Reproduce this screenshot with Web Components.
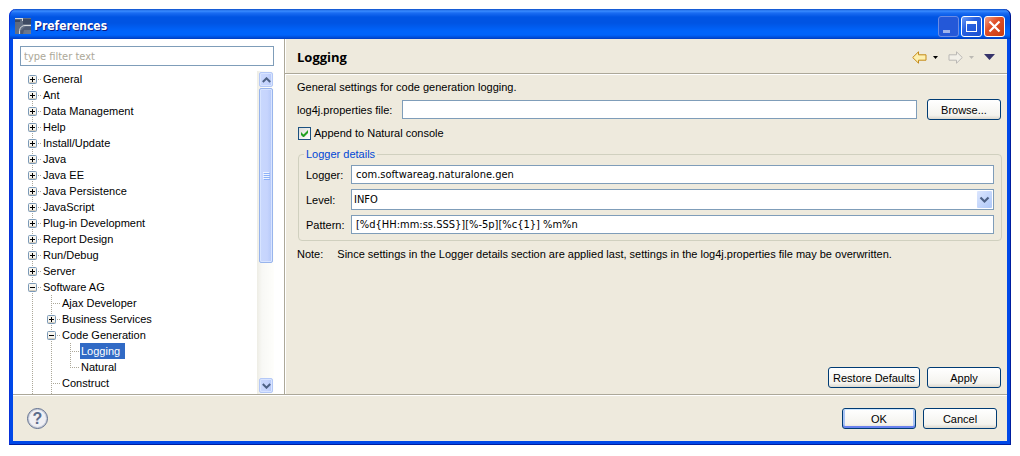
<!DOCTYPE html>
<html lang="en">
<head>
<meta charset="utf-8">
<title>Preferences</title>
<style>
  html { height: 100%; }
  body {
    margin: 0; height: 100vh; box-sizing: border-box; padding: 9px 9px 11px;
    display: flex; background: #fff; color: #000;
    font: 11px/16px "Liberation Sans", sans-serif;
    --line: #aca899; --face: #eeeadd; --field: #7f9db9;
  }
</style>
</head>
<body>
<xp-window caption="Preferences">
  <pref-sidebar slot="side">
    <tree-item label="General" kind="closed" first></tree-item>
    <tree-item label="Ant" kind="closed"></tree-item>
    <tree-item label="Data Management" kind="closed"></tree-item>
    <tree-item label="Help" kind="closed"></tree-item>
    <tree-item label="Install/Update" kind="closed"></tree-item>
    <tree-item label="Java" kind="closed"></tree-item>
    <tree-item label="Java EE" kind="closed"></tree-item>
    <tree-item label="Java Persistence" kind="closed"></tree-item>
    <tree-item label="JavaScript" kind="closed"></tree-item>
    <tree-item label="Plug-in Development" kind="closed"></tree-item>
    <tree-item label="Report Design" kind="closed"></tree-item>
    <tree-item label="Run/Debug" kind="closed"></tree-item>
    <tree-item label="Server" kind="closed"></tree-item>
    <tree-item label="Software AG" kind="open">
      <tree-item label="Ajax Developer"></tree-item>
      <tree-item label="Business Services" kind="closed"></tree-item>
      <tree-item label="Code Generation" kind="open">
        <tree-item label="Logging" selected></tree-item>
        <tree-item label="Natural" last></tree-item>
      </tree-item>
      <tree-item label="Construct" class="tail"></tree-item>
    </tree-item>
  </pref-sidebar>
  <logging-page slot="page"></logging-page>
  <dialog-footer slot="footer"></dialog-footer>
</xp-window>

<script>
const define = (name, markup, setup) => {
  const template = document.createElement('template');
  template.innerHTML = markup;
  customElements.define(name, class extends HTMLElement {
    constructor() {
      super();
      this.attachShadow({ mode: 'open' }).append(template.content.cloneNode(true));
    }
    connectedCallback() { if (setup) setup(this, this.shadowRoot); }
  });
};

define('xp-button', `
<style>
  :host { display: inline-flex; }
  button {
    flex: 1; min-width: 74px; height: 21px; padding: 0 4px; box-sizing: border-box;
    border: 1px solid #003c74; border-radius: 3px; font: inherit; color: inherit; white-space: nowrap;
    background: linear-gradient(#fff, #f4f3ee 80%, #dcd8ce);
  }
  :host([primary]) button { box-shadow: inset 0 1px #cee7ff, inset 0 -2px #6982ee, inset 2px 0 #a9c4f5, inset -2px 0 #a9c4f5; }
</style>
<button type="button"><slot></slot></button>`);

define('xp-window', `
<style>
  :host { flex: 1; min-width: 0; display: flex; flex-direction: column; }
  header {
    height: 30px; flex: none; box-sizing: border-box; padding: 4px 6px 0; display: flex; align-items: center; gap: 2px;
    border-radius: 7px 7px 0 0;
    background: linear-gradient(#0a4cc8 0, #3a8cff 2px, #1a6cf2 4px, #0054e3 8px, #0054e3 14px, #0064fb 22px, #0064fb 26px, #0048d0 29px, #003cc0 30px);
    box-shadow: inset 1px 0 #0831d9, inset -1px 0 #00138c;
  }
  h1 { flex: 1; margin: 0 0 0 1px; font: bold 12px/16px "DejaVu Sans Condensed", sans-serif; color: #fff; text-shadow: 1px 1px #0a1883; }
  .caption { width: 21px; height: 21px; padding: 0; margin: 0; border: 1px solid #fff; border-radius: 3px; box-sizing: border-box;
    background: linear-gradient(135deg, #6c9cf8, #2860e0 40%, #1c50d0); display: flex; }
  .caption svg { width: 19px; height: 19px; }
  .min { background: #2458d8; border-color: #6c8ce4; }
  .close { background: linear-gradient(135deg, #f0a088, #e05028 40%, #c83c10); }
  .buttons { display: flex; gap: 2px; }
  .edge { flex: 1; min-height: 0; display: flex; flex-direction: column; border: solid #001ea0; border-width: 0 1px 1px 1px; border-left-color: #0831d9; }
  .frame {
    flex: 1; min-height: 0; display: flex; flex-direction: column; background: var(--face);
    border: solid #0048e8; border-width: 0 3px 3px;
  }
  .panes { flex: 1; min-height: 0; display: grid; grid-template-columns: 271px minmax(0, 1fr); }
  ::slotted([slot=page]) { border-left: 1px solid var(--line); box-shadow: inset 1px 0 #fff; }
</style>
<header>
  <svg width="16" height="16" viewBox="0 0 16 16"><defs><linearGradient id="i" x2="1" y2="1"><stop stop-color="#596579"/><stop offset="1" stop-color="#6f7b90"/></linearGradient></defs><path fill="url(#i)" d="M0 0h16v16H0z"/><path fill="#3e4a62" d="M8 1h8v5H8zM0 2h5v2H0z"/><path fill="#d4d8dc" d="M0 0h8v3H7V1H0z"/><path d="M4.500 16V12.500C5 9 7.500 7.500 10 7.500h6" fill="none" stroke="#d8dce0"/><path d="M5.500 16v-3c2-1 3-4 6-4.500H16V12H9l-1 4z" fill="#4e5a72"/></svg>
  <h1></h1>
  <div class="buttons">
    <button class="caption min" aria-label="Minimize"><svg viewBox="0 0 19 19"><path fill="#a0b4ec" d="M4 13h7v3H4z"/></svg></button>
    <button class="caption" aria-label="Maximize"><svg viewBox="0 0 19 19"><path fill="#fff" fill-rule="evenodd" d="M4 4h11v11H4zM5 7v7h9V7z"/></svg></button>
    <button class="caption close" aria-label="Close"><svg viewBox="0 0 19 19"><path d="M4.500 4.500l10 10m0-10l-10 10" stroke="#fff" stroke-width="2.200"/></svg></button>
  </div>
</header>
<div class="edge"><div class="frame">
  <div class="panes"><slot name="side"></slot><slot name="page"></slot></div>
  <slot name="footer"></slot>
</div></div>`, (host, root) => { root.querySelector('h1').textContent = host.getAttribute('caption'); });

define('pref-sidebar', `
<style>
  :host { display: flex; flex-direction: column; gap: 5px; background: #fff; padding: 7px 10px 0 7px; min-height: 0; }
  input { width: 100%; height: 20px; flex: none; box-sizing: border-box; border: 1px solid var(--field); padding: 0 3px; font: inherit; font-family: "DejaVu Sans Condensed", sans-serif; border-radius: 0; outline: 0; }
  input::placeholder { color: #aca899; opacity: 1; }
  .view { flex: 1; min-height: 0; display: flex; overflow: hidden; }
  .tree { flex: 1; min-width: 0; overflow: hidden; padding-left: 3px; }
</style>
<input type="text" aria-label="Filter" placeholder="type filter text">
<div class="view"><div class="tree" role="tree"><slot></slot></div><scroll-bar></scroll-bar></div>`);

define('scroll-bar', `
<style>
  :host { width: 17px; box-sizing: border-box; display: flex; flex-direction: column; gap: 1px; padding: 1px 1px 1px 2px;
    background: linear-gradient(90deg, #eeede5, #f8f8f5 30%, #fefefb); }
  .cap, .thumb { box-sizing: border-box; border: 1px solid #b4c8f6; border-radius: 2px; background: linear-gradient(90deg, #c9d8fd, #c6d4fd 60%, #b4c8f8); display: grid; place-items: center; box-shadow: inset 0 0 0 1px #d8e4ff; }
  .cap { height: 15px; flex: none; }
  .thumb { height: 175px; flex: none; border-color: #98b4ec; }
  .space { flex: 1; }
</style>
<div class="cap"><svg width="9" height="6" viewBox="0 0 9 6"><path d="M.8 5L4.500 1.300 8.200 5" fill="none" stroke="#4d6185" stroke-width="2"/></svg></div>
<div class="thumb"><svg width="7" height="8" viewBox="0 0 7 8"><path fill="#eef4fe" d="M0 0h6v1H0zM0 2h6v1H0zM0 4h6v1H0zM0 6h6v1H0z"/><path fill="#8cb0f8" d="M1 1h6v1H1zM1 3h6v1H1zM1 5h6v1H1zM1 7h6v1H1z"/></svg></div>
<div class="space"></div>
<div class="cap"><svg width="9" height="6" viewBox="0 0 9 6"><path d="M.8 1L4.500 4.700 8.200 1" fill="none" stroke="#4d6185" stroke-width="2"/></svg></div>`);

define('tree-item', `
<style>
  :host { display: block; --dots: repeating-linear-gradient(#aca899 0 1px, transparent 1px 2px);
    background: var(--dots) 9px 0 / 1px 100% no-repeat; }
  :host([first]) { background-position: 9px 8px; }
  :host([last]) { background-size: 1px 9px; }
  :host(.tail) { padding-bottom: 4px; }
  .row { display: flex; height: 16px; }
  .joint { width: 19px; display: flex; align-items: center; padding-left: 5px; box-sizing: border-box;
    background: repeating-linear-gradient(90deg, #aca899 0 1px, transparent 1px 2px) 9px 8px / 9px 1px no-repeat; }
  svg { display: none; }
  :host([kind]) svg { display: block; }
  :host([kind=open]) .plus { display: none; }
  .label { padding: 0 1px; white-space: nowrap; }
  :host([selected]) .label { background: #316ac5; color: #fff; padding-right: 5px; }
  .children { padding-left: 19px; }
</style>
<div class="row" role="treeitem"><span class="joint"><svg width="9" height="9" viewBox="0 0 9 9"><rect x=".5" y=".5" width="8" height="8" rx="1" fill="#f6f4ee" stroke="#7b9ab8"/><path fill="#d4cec0" d="M1 7h7v1H1z"/><path d="M2 4h5v1H2z"/><path class="plus" d="M4 2h1v5H4z"/></svg></span><span class="label"></span></div>
<div class="children"><slot></slot></div>`, (host, root) => { root.querySelector('.label').textContent = host.getAttribute('label'); });

define('logging-page', `
<style>
  :host { display: flex; flex-direction: column; min-width: 0; }
  header { height: 36px; box-sizing: border-box; flex: none; display: flex; align-items: center; padding: 1px 12px 0 12px;
    border-bottom: 1px solid #fff; box-shadow: inset 0 -1px var(--line); }
  h2 { flex: 1; margin: 0; font: bold 13px/16px "Open Sans", sans-serif; }
  nav { display: flex; align-items: center; gap: 10px; }
  nav span { display: flex; align-items: center; gap: 6px; }
  nav button { border: 0; padding: 0; background: none; display: flex; }
  main { flex: 1; display: flex; flex-direction: column; padding: 4px 5px 6px 12px; }
  p { margin: 0; }
  .file { display: flex; align-items: center; gap: 10px; margin: 4px 1px 0 0; }
  input[type=text], select { flex: 1; min-width: 0; box-sizing: border-box; width: 100%; height: 19px; border: 1px solid var(--field); border-radius: 0; background: #fff; font: inherit; font-family: "DejaVu Sans Condensed", sans-serif; color: inherit; padding: 0 4px; outline: 0; }
  .check { display: flex; align-items: center; gap: 3px; margin-top: 5px; align-self: flex-start; }
  .box { display: grid; width: 13px; height: 13px; margin-left: 1px; }
  .box > * { grid-area: 1 / 1; }
  .box input { appearance: none; margin: 0; border: 1px solid #1c5180; background: linear-gradient(135deg, #dcdcd7, #fff); }
  svg { pointer-events: none; }
  .box input:not(:checked) + svg { display: none; }
  fieldset { margin: 5px 0 0 1px; padding: 3px 7px 6px; border: 1px solid #d0d0bf; border-radius: 4px; min-width: 0; }
  legend { color: #0046d5; padding: 0 2px; margin-left: -2px; }
  .fields { display: grid; grid-template-columns: 45px minmax(0, 1fr); align-items: center; row-gap: 5px; }
  .combo { display: grid; }
  .combo > * { grid-area: 1 / 1; }
  .combo select { appearance: none; height: 21px; padding: 0 20px 0 2px; }
  .combo svg { justify-self: end; align-self: center; margin-right: 2px; }
  .note { display: flex; gap: 14px; margin-top: 5px; }
  .actions { margin: auto 1px 0 0; display: flex; justify-content: flex-end; gap: 7px; }
</style>
<header>
  <h2>Logging</h2>
  <nav>
    <span><button aria-label="Back"><svg width="15" height="13" viewBox="0 0 15 13"><path d="M.7 6.500L6.500.8v3h7.500v5.400H6.500v3z" fill="#fdf0b0" stroke="#c48a18"/></svg></button>
    <button aria-label="Back history"><svg width="5" height="3" viewBox="0 0 5 3"><path d="M0 0h5L2.500 3z"/></svg></button></span>
    <span><button aria-label="Forward"><svg width="15" height="13" viewBox="0 0 15 13"><path d="M14.300 6.500L8.500.8v3H1v5.400h7.500v3z" fill="#f2f0e8" stroke="#bab8b4"/></svg></button>
    <button aria-label="Forward history"><svg width="5" height="3" viewBox="0 0 5 3"><path fill="#bcbab4" d="M0 0h5L2.500 3z"/></svg></button></span>
    <button aria-label="Menu"><svg width="11" height="6" viewBox="0 0 11 6"><path fill="#35336a" d="M0 0h11L5.500 6z"/></svg></button>
  </nav>
</header>
<main>
  <p>General settings for code generation logging.</p>
  <div class="file"><label for="file">log4j.properties file:</label><input id="file" type="text"><xp-button>Browse...</xp-button></div>
  <label class="check"><span class="box"><input type="checkbox" checked><svg width="13" height="13" viewBox="0 0 13 13"><path fill="#21a121" d="M3 5v3l2 2h1l4-4V3L5.500 7.500z"/></svg></span>Append to Natural console</label>
  <fieldset>
    <legend>Logger details</legend>
    <div class="fields">
      <label for="logger">Logger:</label><input id="logger" type="text" value="com.softwareag.naturalone.gen">
      <label for="level">Level:</label>
      <div class="combo"><select id="level"><option>INFO</option></select>
        <svg width="15" height="17" viewBox="0 0 15 17"><defs><linearGradient id="g" x2="1" y2="1"><stop stop-color="#dce6fe"/><stop offset="1" stop-color="#aec8f8"/></linearGradient></defs><rect width="15" height="17" rx="1" fill="url(#g)"/><path d="M3.500 6.500l4 4 4-4" fill="none" stroke="#4d6185" stroke-width="2.200"/></svg></div>
      <label for="pattern">Pattern:</label><input id="pattern" type="text" value="[%d{HH:mm:ss.SSS}][%-5p][%c{1}] %m%n">
    </div>
  </fieldset>
  <p class="note"><span>Note:</span><span>Since settings in the Logger details section are applied last, settings in the log4j.properties file may be overwritten.</span></p>
  <div class="actions"><xp-button>Restore Defaults</xp-button><xp-button>Apply</xp-button></div>
</main>`);

define('dialog-footer', `
<style>
  :host { display: flex; align-items: center; gap: 7px; height: 47px; flex: none; box-sizing: border-box; padding: 1px 10px 0 14px;
    border-top: 1px solid var(--line); box-shadow: inset 0 1px #fff; }
  .help { width: 21px; height: 21px; margin-right: auto; border: 1px solid #5c6c8c; border-radius: 50%; padding: 0;
    background: #f0f0f4; box-shadow: inset 0 0 0 1px #c4cad8; color: #5c6c8c; font: bold 16px/19px "Liberation Sans", sans-serif; }
</style>
<button class="help" aria-label="Help">?</button>
<xp-button primary>OK</xp-button>
<xp-button>Cancel</xp-button>`);
</script>
</body>
</html>
